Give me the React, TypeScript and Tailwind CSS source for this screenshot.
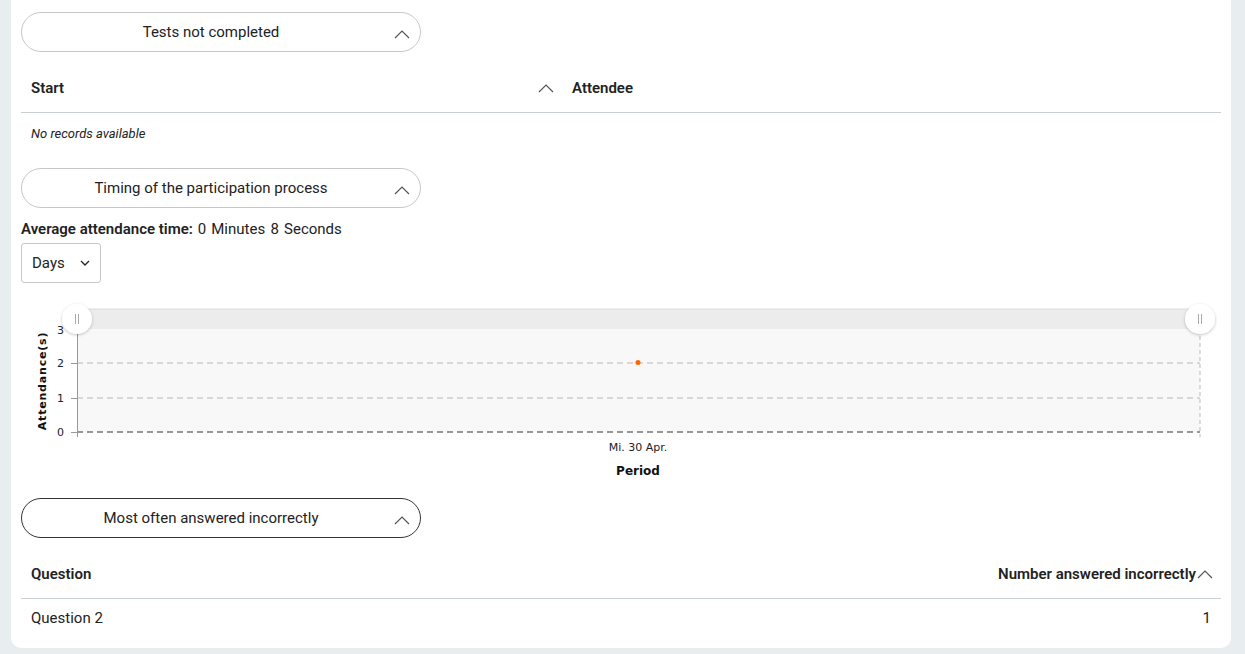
import React from 'react';

const font = { fontFamily: 'Roboto, "Liberation Sans", sans-serif' };

function Chevron({ className = '' }: { className?: string }) {
  return (
    <svg width="16" height="10" viewBox="0 0 16 10" className={className}>
      <path d="M1 9 L8 2 L15 9" fill="none" stroke="#555" strokeWidth="1.2" />
    </svg>
  );
}

function Toggle({ label, dark }: { label: string; dark?: boolean }) {
  return (
    <button
      className={`relative w-[400px] h-[40px] rounded-full border bg-white text-[15px] text-[#222] flex items-center justify-center pr-[20px] ${
        dark ? 'border-[#333]' : 'border-[#c4c8cb]'
      }`}
    >
      <span>{label}</span>
      <Chevron className="absolute right-[10px] top-[16px]" />
    </button>
  );
}

function Chart() {
  const dash = '6 4';
  return (
    <svg width="1200" height="190" viewBox="0 0 1200 190" className="block" style={{ fontFamily: '"DejaVu Sans", Verdana, sans-serif' }}>
      <rect x="56" y="13" width="1123" height="20" fill="#ececec" />
      <line x1="56" y1="13" x2="1179" y2="13" stroke="#dcdcdc" />
      <rect x="56" y="33" width="1123" height="103" fill="#f8f8f8" />
      <line x1="56" y1="67" x2="1179" y2="67" stroke="#b8b8b8" strokeDasharray={dash} />
      <line x1="56" y1="102" x2="1179" y2="102" stroke="#b8b8b8" strokeDasharray={dash} />
      <line x1="56" y1="136" x2="1179" y2="136" stroke="#333" strokeDasharray={dash} />
      <line x1="1179" y1="33" x2="1179" y2="141" stroke="#bbb" strokeDasharray="4 3" />
      <line x1="56.5" y1="33" x2="56.5" y2="141" stroke="#999" />
      {[67, 102, 136].map(y => (
        <line key={y} x1="50" y1={y + 0.5} x2="56" y2={y + 0.5} stroke="#999" />
      ))}
      <g fontSize="11" fill="#222" textAnchor="end">
        <text x="43" y="38">3</text>
        <text x="43" y="71">2</text>
        <text x="43" y="106">1</text>
        <text x="43" y="140">0</text>
      </g>
      <text
        x="0"
        y="0"
        transform="translate(25 85) rotate(-90)"
        textAnchor="middle"
        fontSize="11"
        fontWeight="bold"
        letterSpacing="0.8"
        fill="#111"
      >
        Attendance(s)
      </text>
      <circle cx="617" cy="66.5" r="2.5" fill="#ff6600" />
      <text x="617" y="155" textAnchor="middle" fontSize="11" fill="#222">Mi. 30 Apr.</text>
      <text x="617" y="179" textAnchor="middle" fontSize="12" fontWeight="bold" fill="#111">Period</text>
      <defs>
        <filter id="sh" x="-50%" y="-50%" width="200%" height="200%">
          <feDropShadow dx="0" dy="1" stdDeviation="1.5" floodColor="#000" floodOpacity="0.25" />
        </filter>
      </defs>
      {[56, 1179].map(cx => (
        <g key={cx}>
          <circle cx={cx} cy="23" r="15" fill="#fff" filter="url(#sh)" />
          <line x1={cx - 1.5} y1="18" x2={cx - 1.5} y2="28" stroke="#aaa" />
          <line x1={cx + 1.5} y1="18" x2={cx + 1.5} y2="28" stroke="#aaa" />
        </g>
      ))}
    </svg>
  );
}

export default function App() {
  return (
    <div className="w-[1245px] h-[654px] bg-[#e8edef] overflow-hidden" style={font}>
      <div className="ml-[11px] w-[1220px] h-[648px] bg-white rounded-b-[10px] px-[10px] pt-[12px]">
        {/* Tests not completed */}
        <Toggle label="Tests not completed" />
        <table className="w-full mt-[12px] text-[15px] text-[#222]">
          <thead>
            <tr className="border-b border-[#c8d0d4] h-[48px]">
              <th className="text-left font-semibold pl-[10px] w-[541px]">
                <div className="flex items-center justify-between pr-[8px]">
                  <span>Start</span>
                  <Chevron />
                </div>
              </th>
              <th className="text-left font-semibold pl-[10px]">Attendee</th>
            </tr>
          </thead>
          <tbody>
            <tr className="h-[42px]">
              <td className="pl-[10px] italic text-[13px]" colSpan={2}>No records available</td>
            </tr>
          </tbody>
        </table>

        {/* Timing */}
        <div className="mt-[14px]">
          <Toggle label="Timing of the participation process" />
        </div>
        <div className="mt-[10px] text-[15px] leading-[22px] text-[#222]">
          <span className="font-semibold">Average attendance time:</span>{' '}
          <span className="ml-[1px] [word-spacing:1.5px]">0 Minutes 8 Seconds</span>
        </div>
        <div className="mt-[3px] w-[80px] h-[40px] border border-[#c4c8cb] rounded-[3px] flex items-center justify-between px-[10px] text-[15px] text-[#222]">
          <span>Days</span>
          <svg width="10" height="6" viewBox="0 0 10 6">
            <path d="M1 1 L5 5 L9 1" fill="none" stroke="#222" strokeWidth="1.3" />
          </svg>
        </div>
        <div className="mt-[13px]">
          <Chart />
        </div>

        {/* Most often answered incorrectly */}
        <div className="mt-[12px]">
          <Toggle label="Most often answered incorrectly" dark />
        </div>
        <table className="w-full mt-[13px] text-[15px] text-[#222]">
          <thead>
            <tr className="border-b border-[#c8d0d4] h-[47px]">
              <th className="text-left font-semibold pl-[10px]">Question</th>
              <th className="text-right font-semibold pr-[8px]">
                <div className="flex items-center justify-end gap-[1px]">
                  <span>Number answered incorrectly</span>
                  <Chevron />
                </div>
              </th>
            </tr>
          </thead>
          <tbody>
            <tr className="h-[40px]">
              <td className="pl-[10px]">Question 2</td>
              <td className="text-right pr-[10px]">1</td>
            </tr>
          </tbody>
        </table>
      </div>
    </div>
  );
}
